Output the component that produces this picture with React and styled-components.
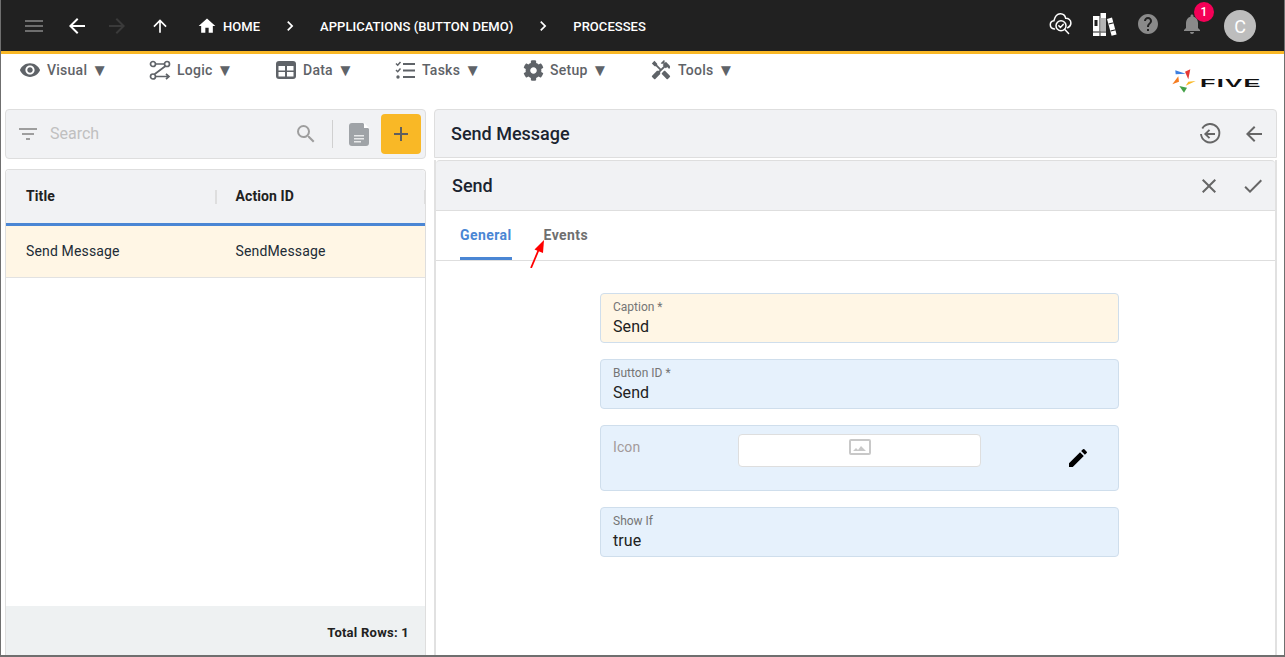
import React from 'react';
import styled, { createGlobalStyle } from 'styled-components';
import {
  MdMenu, MdArrowBack, MdArrowForward, MdArrowUpward, MdHome, MdChevronRight, MdHelp, MdNotifications,
  MdVisibility, MdHandyman, MdFilterList, MdSearch, MdAdd, MdClose, MdCheck, MdEdit,
} from 'react-icons/md';
import { FaCog } from 'react-icons/fa';

const GlobalStyle = createGlobalStyle`
  html, body { margin: 0; padding: 0; background: #fff; overflow: hidden; }
  body { font-family: Roboto, "Liberation Sans", sans-serif; }
`;

const Frame = styled.div`
  width: 1285px;
  height: 657px;
  box-sizing: border-box;
  border-left: 1px solid #6f6f6f;
  border-right: 1px solid #6f6f6f;
  border-bottom: 2px solid #6f6f6f;
  overflow: hidden;
  display: flex;
  flex-direction: column;
`;

const TopBar = styled.header`
  height: 51px;
  flex: none;
  box-sizing: border-box;
  background: #212121;
  display: flex;
  align-items: center;
  padding: 1px 28px 0 21px;
  color: #fff;
`;

const Accent = styled.div`
  height: 3px;
  flex: none;
  background: #f9b826;
`;

const NavButton = styled.span`
  display: flex;
  width: ${(p) => p.$w || 24}px;
  margin-right: ${(p) => p.$mr || 0}px;
  color: ${(p) => p.$color || '#fff'};
  flex: none;
`;

const Crumb = styled.span`
  font-size: 13px;
  font-weight: 500;
  letter-spacing: 0.04px;
  color: #fff;
  margin-right: ${(p) => p.$mr || 0}px;
  white-space: nowrap;
`;

const Spacer = styled.div`
  flex: 1;
`;

const ToolGroup = styled.div`
  display: flex;
  align-items: center;
  margin-top: -4px;
`;

const Badge = styled.span`
  position: absolute;
  top: -10px;
  left: 14px;
  width: 20px;
  height: 20px;
  border-radius: 50%;
  background: #f50057;
  color: #fff;
  font-size: 12px;
  font-weight: 500;
  display: flex;
  align-items: center;
  justify-content: center;
`;

const BellWrap = styled.span`
  position: relative;
  display: flex;
  margin-right: 20px;
  color: #8a8a8a;
`;

const Avatar = styled.span`
  width: 32px;
  height: 32px;
  flex: none;
  border-radius: 50%;
  background: #bdbdbd;
  color: #fff;
  font-size: 18px;
  display: flex;
  align-items: center;
  justify-content: center;
`;

const MenuRow = styled.nav`
  height: 55px;
  flex: none;
  display: flex;
  align-items: flex-start;
  padding-left: 18px;
  position: relative;
`;

const MenuItem = styled.div`
  display: flex;
  align-items: center;
  gap: 6px;
  height: 32px;
  width: ${(p) => p.$w}px;
  flex: none;
  color: #5f6368;
  font-size: 14px;
  font-weight: 500;
  letter-spacing: 0.25px;
  svg { flex: none; }
`;

const Caret = styled.span`
  font-size: 17px;
  letter-spacing: 0;
  margin-left: -2px;
`;

const LogoWrap = styled.div`
  position: absolute;
  left: 1171px;
  top: 15px;
  display: flex;
  align-items: center;
  gap: 3px;
`;

const LogoWord = styled.span`
  font-family: "Liberation Sans", sans-serif;
  font-size: 11px;
  line-height: 11px;
  font-weight: 700;
  letter-spacing: 0.6px;
  color: #111;
  transform: scaleX(2.3);
  transform-origin: left center;
  width: 58px;
  margin-top: 3px;
`;

const Body = styled.main`
  flex: 1;
  min-height: 0;
  display: flex;
  gap: 8px;
  padding-left: 4px;
  padding-right: 7px;
`;

const LeftColumn = styled.section`
  width: 421px;
  flex: none;
  display: flex;
  flex-direction: column;
  gap: 10px;
`;

const SearchPanel = styled.div`
  height: 50px;
  flex: none;
  box-sizing: border-box;
  background: #f1f2f4;
  border: 1px solid #dedede;
  border-radius: 4px;
  display: flex;
  align-items: center;
  padding: 0 4px 0 10px;
  color: #9e9e9e;
`;

const SearchText = styled.span`
  flex: 1;
  margin: 0 0 2px 10px;
  font-size: 16px;
  color: #c0c0c0;
`;

const VDivider = styled.span`
  width: 1px;
  height: 28px;
  background: #d0d0d0;
  margin: 0 16px 0 14px;
`;

const AddButton = styled.span`
  width: 40px;
  height: 40px;
  border-radius: 4px;
  background: #f9b826;
  color: #5f5f5f;
  display: flex;
  align-items: center;
  justify-content: center;
  margin-left: 12px;
`;

const TablePanel = styled.div`
  flex: 1;
  min-height: 0;
  box-sizing: border-box;
  border: 1px solid #dedede;
  border-bottom: 0;
  border-radius: 4px 4px 0 0;
  display: flex;
  flex-direction: column;
`;

const HeadRow = styled.div`
  height: 53px;
  flex: none;
  box-sizing: content-box;
  background: #f1f2f4;
  border-bottom: 3px solid #4a86d4;
  display: grid;
  grid-template-columns: 209.5px 1fr;
  align-items: center;
  border-radius: 4px 4px 0 0;
`;

const HeadCell = styled.div`
  padding: 0 0 2px 20px;
  font-size: 14px;
  font-weight: 700;
  letter-spacing: 0.1px;
  color: #212121;
  position: relative;
  &::after {
    content: '';
    position: absolute;
    right: -1px;
    top: 2px;
    height: 14px;
    width: 2px;
    background: #dedede;
  }
`;

const DataRow = styled.div`
  height: 51px;
  flex: none;
  background: #fff6e5;
  border-bottom: 1px solid #e2e2e2;
  display: grid;
  grid-template-columns: 209.5px 1fr;
  align-items: center;
`;

const DataCell = styled.div`
  padding: 0 0 1px 20px;
  font-size: 14px;
  letter-spacing: 0.15px;
  color: #212b36;
`;

const TableFill = styled.div`
  flex: 1;
`;

const TableFooter = styled.div`
  height: 49px;
  flex: none;
  box-sizing: border-box;
  background: #eef1f2;
  display: flex;
  align-items: center;
  justify-content: flex-end;
  padding: 3px 16px 0 0;
  font-size: 13px;
  font-weight: 700;
  letter-spacing: 0.25px;
  color: #212121;
`;

const RightColumn = styled.section`
  flex: 1;
  min-width: 0;
  display: flex;
  flex-direction: column;
`;

const TitleBar = styled.div`
  height: 49px;
  flex: none;
  box-sizing: border-box;
  background: #f1f2f4;
  border: 1px solid #dedede;
  border-radius: 4px 4px 0 0;
  display: flex;
  align-items: center;
  gap: 20px;
  padding: 0 10px 0 16px;
  color: #666;
`;

const Heading = styled.h2`
  flex: 1;
  margin: 0;
  font-size: 18px;
  font-weight: 500;
  color: #1b2430;
`;

const FormCard = styled.div`
  flex: 1;
  min-height: 0;
  margin-top: 2px;
  box-sizing: border-box;
  border: 2px solid #e1e1e1;
  border-bottom: 0;
  border-top: 0;
  display: flex;
  flex-direction: column;
`;

const FormHead = styled.div`
  height: 51px;
  flex: none;
  box-sizing: border-box;
  background: #f1f2f4;
  border-top: 1px solid #dedede;
  border-bottom: 1px solid #dedede;
  border-radius: 4px 4px 0 0;
  display: flex;
  align-items: center;
  gap: 20px;
  padding: 0 10px 0 16px;
  color: #666;
`;

const TabRow = styled.div`
  height: 50px;
  flex: none;
  box-sizing: border-box;
  border-bottom: 1px solid #dedede;
  display: flex;
  padding-left: 24px;
  gap: 32px;
  position: relative;
`;

const Tab = styled.div`
  font-size: 14px;
  font-weight: 700;
  letter-spacing: 0.42px;
  height: 49px;
  box-sizing: border-box;
  padding-top: 16px;
  color: ${(p) => (p.$active ? '#4a86d4' : '#6f6f6f')};
  border-bottom: 3px solid ${(p) => (p.$active ? '#4a86d4' : 'transparent')};
`;

const Arrow = styled.svg`
  position: absolute;
  left: 93px;
  top: 29px;
`;

const Form = styled.div`
  width: 519px;
  margin: 32px 0 0 164px;
  display: flex;
  flex-direction: column;
  gap: 16px;
`;

const Field = styled.div`
  height: ${(p) => p.$h || 50}px;
  box-sizing: border-box;
  background: ${(p) => (p.$warm ? '#fff6e5' : '#e6f1fc')};
  border: 1px solid #cfdeec;
  border-radius: 4px;
  padding: 6px 12px 0;
  display: ${(p) => (p.$row ? 'flex' : 'block')};
`;

const FieldLabel = styled.div`
  font-size: 12px;
  line-height: 14px;
  color: #757575;
`;

const FieldValue = styled.div`
  font-size: 16px;
  line-height: 20px;
  letter-spacing: 0.1px;
  margin-top: 3px;
  color: #212121;
`;

const IconLabel = styled.div`
  width: 125px;
  flex: none;
  padding-top: 7px;
  font-size: 14px;
  letter-spacing: 0.1px;
  color: #a39a9a;
`;

const IconPreview = styled.div`
  width: 243px;
  height: 33px;
  box-sizing: border-box;
  flex: none;
  margin-top: 2px;
  background: #fff;
  border: 1px solid #dedede;
  border-radius: 4px;
  display: flex;
  justify-content: center;
  padding-top: 4px;
`;

const EditSlot = styled.span`
  display: flex;
  margin: 14px 0 0 85px;
  color: #000;
`;

const ImageGlyph = () => (
  <svg width="22" height="16" viewBox="0 0 22 16">
    <rect x="1" y="1" width="20" height="14" rx="1" fill="none" stroke="#c8c8c8" strokeWidth="2" />
    <path d="M4 12l3-3 2 2 3-4 5 5z" fill="#c8c8c8" />
  </svg>
);

const DocGlyph = () => (
  <svg width="20" height="23" viewBox="0 0 20 23" style={{ flex: 'none' }}>
    <path d="M3 0h11l6 6v14a3 3 0 0 1-3 3H3a3 3 0 0 1-3-3V3a3 3 0 0 1 3-3z" fill="#9fa3a7" />
    <path d="M15 0l5 5h-5z" fill="#fff" />
    <path d="M5 12h10v1.400H5zM5 15h10v1.400H5zM5 18h7v1.400H5z" fill="#e8e9ea" />
  </svg>
);

const CloudCheck = () => (
  <svg width="24" height="24" viewBox="0 0 24 24" fill="none" stroke="#fff" strokeWidth="1.5" strokeLinecap="round">
    <path d="M5.500 17C3 16.700 1.300 15 1.300 12.800c0-2.200 1.600-3.800 3.600-4C5.600 6 7.600 1.600 11.500 1.800c2.600.1 4.600 2 5.200 4.400 2.800-.1 5.200 1.900 5.200 4.900 0 2.300-1.400 3.900-3.200 4.600" />
    <circle cx="12" cy="13.700" r="5" />
    <path d="M9.800 13.800l1.600 1.600 2.800-3M15.800 17.600l3.800 3.900" />
  </svg>
);

const Books = () => (
  <svg width="26" height="26" viewBox="0 0 26 26" fill="#fff">
    <rect x="2" y="5" width="6.500" height="20" />
    <rect x="9.500" y="2" width="5.500" height="23" />
    <rect x="9.500" y="7" width="5.500" height="13" fill="#b5b5b5" />
    <path d="M16 8l5-1.400 4.600 16.800-5 1.400z" />
    <rect x="3.500" y="9" width="3" height="6" fill="#212121" />
    <rect x="2" y="20.500" width="6.500" height="1" fill="#212121" />
    <rect x="9.500" y="20.500" width="5.500" height="1" fill="#212121" />
    <path d="M17.600 12.500l5-1.300.3 1-5 1.300zM19.500 19.500l5-1.300.3 1-5 1.300z" fill="#212121" />
  </svg>
);

const LogicIcon = () => (
  <svg width="22" height="22" viewBox="0 0 22 22" fill="none" stroke="#5f6368" strokeWidth="1.700">
    <circle cx="4" cy="5" r="2.500" />
    <circle cx="18" cy="5" r="2.500" />
    <circle cx="4" cy="17.500" r="2.500" />
    <path d="M6.500 5h9M16.500 7L5.500 15.300M6.500 17.500h13M17 14.800l3 2.700-3 2.700" />
  </svg>
);

const DataIcon = () => (
  <svg width="22" height="22" viewBox="0 0 22 22">
    <rect x="1" y="2" width="20" height="18" rx="3" fill="#5f6368" />
    <rect x="3.500" y="7" width="6.500" height="4.500" fill="#fff" />
    <rect x="12" y="7" width="6.500" height="4.500" fill="#fff" />
    <rect x="3.500" y="13" width="6.500" height="4.500" fill="#fff" />
    <rect x="12" y="13" width="6.500" height="4.500" fill="#fff" />
  </svg>
);

const TasksIcon = () => (
  <svg width="22" height="22" viewBox="0 0 22 22" fill="none" stroke="#5f6368" strokeWidth="2">
    <path d="M9 5h12M9 11.500h12M9 18h12" />
    <path d="M2 4.500l1.700 1.700L6.500 3M2 11l1.700 1.700L6.500 9.500" strokeWidth="1.500" />
    <circle cx="4" cy="18" r="1.700" fill="#5f6368" stroke="none" />
  </svg>
);

const BackCircle = () => (
  <svg width="24" height="24" viewBox="0 0 24 24" fill="none" stroke="#666" strokeWidth="1.900">
    <path d="M4.300 6.400A9.200 9.200 0 1 1 3 12" />
    <path d="M17 12H7.500M11.500 7.800L7.300 12l4.200 4.200" />
  </svg>
);

const FiveMark = () => (
  <svg width="25" height="25" viewBox="0 0 25 25" style={{ flex: 'none' }}>
    <path d="M3.300 1.300L13.700 4.700 3.700 5.300z" fill="#3d7fe0" />
    <path d="M18.300.3L13 2.700l3.300 7.600z" fill="#e53935" />
    <path d="M23.700 12l-7.400.7-2.600 4z" fill="#f9b826" />
    <path d="M7.300 17l7.700 1.700-3 5z" fill="#43a047" />
    <path d="M.3 15.300L6.300 7.300 7 12.700z" fill="#f57c20" />
  </svg>
);

export default function App() {
  return (
    <>
      <GlobalStyle />
      <Frame>
        <TopBar>
          <NavButton $mr={19} $color="#6e6e6e"><MdMenu size={24} /></NavButton>
          <NavButton $mr={16}><MdArrowBack size={24} /></NavButton>
          <NavButton $mr={21} $color="#3a3a3a"><MdArrowForward size={24} /></NavButton>
          <NavButton $mr={23}><MdArrowUpward size={20} /></NavButton>
          <NavButton $mr={6} $w={20}><MdHome size={20} /></NavButton>
          <Crumb $mr={20}>HOME</Crumb>
          <NavButton $mr={20} $w={20}><MdChevronRight size={20} /></NavButton>
          <Crumb $mr={20}>APPLICATIONS (BUTTON DEMO)</Crumb>
          <NavButton $mr={20} $w={20}><MdChevronRight size={20} /></NavButton>
          <Crumb>PROCESSES</Crumb>
          <Spacer />
          <ToolGroup>
            <NavButton $mr={18}><CloudCheck /></NavButton>
            <NavButton $w={26} $mr={19}><Books /></NavButton>
            <NavButton $mr={20} $color="#8a8a8a"><MdHelp size={24} /></NavButton>
            <BellWrap>
              <MdNotifications size={24} />
              <Badge>1</Badge>
            </BellWrap>
          </ToolGroup>
          <Avatar>C</Avatar>
        </TopBar>
        <Accent />
        <MenuRow>
          <MenuItem $w={130}><MdVisibility size={22} />Visual <Caret>▼</Caret></MenuItem>
          <MenuItem $w={126}><LogicIcon />Logic <Caret>▼</Caret></MenuItem>
          <MenuItem $w={119}><DataIcon />Data <Caret>▼</Caret></MenuItem>
          <MenuItem $w={129}><TasksIcon />Tasks <Caret>▼</Caret></MenuItem>
          <MenuItem $w={127}><FaCog size={21} />Setup <Caret>▼</Caret></MenuItem>
          <MenuItem $w={110}><MdHandyman size={22} />Tools <Caret>▼</Caret></MenuItem>
          <LogoWrap>
            <FiveMark />
            <LogoWord>FIVE</LogoWord>
          </LogoWrap>
        </MenuRow>
        <Body>
          <LeftColumn>
            <SearchPanel>
              <MdFilterList size={24} />
              <SearchText>Search</SearchText>
              <MdSearch size={24} />
              <VDivider />
              <DocGlyph />
              <AddButton><MdAdd size={24} /></AddButton>
            </SearchPanel>
            <TablePanel>
              <HeadRow>
                <HeadCell>Title</HeadCell>
                <HeadCell>Action ID</HeadCell>
              </HeadRow>
              <DataRow>
                <DataCell>Send Message</DataCell>
                <DataCell>SendMessage</DataCell>
              </DataRow>
              <TableFill />
              <TableFooter>Total Rows: 1</TableFooter>
            </TablePanel>
          </LeftColumn>
          <RightColumn>
            <TitleBar>
              <Heading>Send Message</Heading>
              <BackCircle />
              <MdArrowBack size={24} />
            </TitleBar>
            <FormCard>
              <FormHead>
                <Heading>Send</Heading>
                <MdClose size={24} />
                <MdCheck size={24} />
              </FormHead>
              <TabRow>
                <Tab $active>General</Tab>
                <Tab>Events</Tab>
                <Arrow width="18" height="28" viewBox="0 0 18 28">
                  <path d="M2 28L10 9" stroke="#f00" strokeWidth="1.800" />
                  <path d="M15 0l-1 13-8.500-3.500z" fill="#f00" />
                </Arrow>
              </TabRow>
              <Form>
                <Field $warm>
                  <FieldLabel>Caption *</FieldLabel>
                  <FieldValue>Send</FieldValue>
                </Field>
                <Field>
                  <FieldLabel>Button ID *</FieldLabel>
                  <FieldValue>Send</FieldValue>
                </Field>
                <Field $h={66} $row>
                  <IconLabel>Icon</IconLabel>
                  <IconPreview><ImageGlyph /></IconPreview>
                  <EditSlot><MdEdit size={24} /></EditSlot>
                </Field>
                <Field>
                  <FieldLabel>Show If</FieldLabel>
                  <FieldValue>true</FieldValue>
                </Field>
              </Form>
            </FormCard>
          </RightColumn>
        </Body>
      </Frame>
    </>
  );
}
